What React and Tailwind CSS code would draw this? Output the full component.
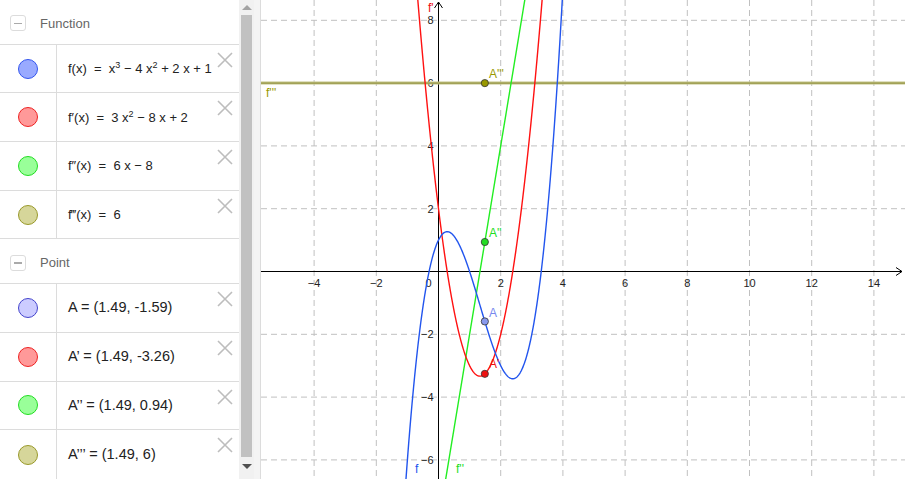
import React from "react";

const ox = 439.5;
const oy = 271.5;
const sx = 31.1;
const sy = 31.4;
const px = (x) => ox + x * sx;
const py = (y) => oy - y * sy;

const f = (x) => x * x * x - 4 * x * x + 2 * x + 1;
const f1 = (x) => 3 * x * x - 8 * x + 2;
const f2 = (x) => 6 * x - 8;

const curve = (fn) => {
  let d = "";
  for (let x = -6; x <= 15; x += 0.01) {
    const y = Math.max(-300, Math.min(800, py(fn(x))));
    d += (d ? "L" : "M") + px(x).toFixed(2) + " " + y.toFixed(2) + " ";
  }
  return d;
};

const gridX = [-4, -2, 2, 4, 6, 8, 10, 12, 14];
const gridY = [-6, -4, -2, 2, 4, 6, 8];
const lbl = (n) => (n < 0 ? "\u2212" + Math.abs(n) : String(n));

const Cross = () => (
  <svg className="absolute right-[6px] top-[7px]" width="16" height="16" viewBox="0 0 16 16">
    <path d="M1 1L15 15M15 1L1 15" stroke="#bdbdbd" strokeWidth="1.6" fill="none" />
  </svg>
);

const Row = ({ fill, stroke, children, last }) => (
  <div className={`relative flex h-[49px] ${last ? "" : "border-b border-[#dcdcdc]"}`}>
    <div className="flex w-[57px] shrink-0 items-center justify-center border-r border-[#dcdcdc]">
      <div className="h-[20px] w-[20px] rounded-full border" style={{ background: fill, borderColor: stroke }} />
    </div>
    <div className="flex items-center pl-[11px] text-[#222]">{children}</div>
    <Cross />
  </div>
);

const Header = ({ title }) => (
  <div className="flex h-[45px] items-center border-b border-[#dcdcdc] pl-[10px] pt-[3px]">
    <div className="flex h-[16px] w-[16px] items-center justify-center rounded-[3px] border border-[#dcdcdc]">
      <div className="h-[1.5px] w-[8px] bg-[#aaa]" />
    </div>
    <span className="ml-[14px] text-[13px] text-[#666]">{title}</span>
  </div>
);

const Math1 = ({ children }) => (
  <span className="whitespace-nowrap text-[13px]" style={{ fontFamily: '"Liberation Sans", Arial, sans-serif' }}>
    {children}
  </span>
);

const Sup = ({ children }) => <sup className="text-[9px]">{children}</sup>;

const Pt = ({ children }) => (
  <span className="whitespace-nowrap text-[14.5px]" style={{ fontFamily: '"Liberation Sans", Arial, sans-serif' }}>
    {children}
  </span>
);

const blue = ["#99aaff", "#3355ee"];
const red = ["#ff9999", "#ee2222"];
const green = ["#99ff99", "#22dd22"];
const olive = ["#d6d69a", "#99992a"];
const ptBlue = ["#ccccff", "#4444cc"];

export default function App() {
  return (
    <div className="flex h-[479px] w-[906px] overflow-hidden bg-white" style={{ fontFamily: '"Liberation Sans", Arial, sans-serif' }}>
      {/* algebra view */}
      <div className="flex w-[239px] shrink-0 flex-col">
        <Header title="Function" />
        <Row fill={blue[0]} stroke={blue[1]}>
          <Math1>
            f(x)&nbsp; = &nbsp;x<Sup>3</Sup> − 4 x<Sup>2</Sup> + 2 x + 1
          </Math1>
        </Row>
        <Row fill={red[0]} stroke={red[1]}>
          <Math1>
            f′(x)&nbsp; = &nbsp;3 x<Sup>2</Sup> − 8 x + 2
          </Math1>
        </Row>
        <Row fill={green[0]} stroke={green[1]}>
          <Math1>f″(x)&nbsp; = &nbsp;6 x − 8</Math1>
        </Row>
        <Row fill={olive[0]} stroke={olive[1]}>
          <Math1>f‴(x)&nbsp; = &nbsp;6</Math1>
        </Row>
        <Header title="Point" />
        <Row fill={ptBlue[0]} stroke={ptBlue[1]}>
          <Pt>A = (1.49, -1.59)</Pt>
        </Row>
        <Row fill={red[0]} stroke={red[1]}>
          <Pt>A’ = (1.49, -3.26)</Pt>
        </Row>
        <Row fill={green[0]} stroke={green[1]}>
          <Pt>A’’ = (1.49, 0.94)</Pt>
        </Row>
        <Row fill={olive[0]} stroke={olive[1]} last>
          <Pt>A’’’ = (1.49, 6)</Pt>
        </Row>
      </div>

      {/* scrollbar */}
      <div className="flex w-[15px] shrink-0 flex-col items-center bg-[#f1f1f1]">
        <div className="mt-[5px] h-0 w-0 border-x-[5px] border-b-[5px] border-x-transparent border-b-[#a3a3a3]" />
        <div className="mt-[5px] h-[442px] w-[11px] bg-[#c1c1c1]" />
        <div className="mt-[7px] h-0 w-0 border-x-[5px] border-t-[5px] border-x-transparent border-t-[#505050]" />
      </div>

      {/* splitter */}
      <div className="w-[7px] shrink-0 border-r border-[#dcdcdc] bg-[#f4f4f4]" />

      {/* graphics view */}
      <div className="flex-1">
        <svg width="644" height="479" viewBox="262 0 644 479" style={{ fontFamily: '"Liberation Sans", Arial, sans-serif' }}>
          {gridX.map((g) => (
            <line key={"gx" + g} x1={px(g)} y1="0" x2={px(g)} y2="479" stroke="#c0c0c0" strokeDasharray="6 4" />
          ))}
          {gridY.map((g) => (
            <line key={"gy" + g} x1="262" y1={py(g)} x2="906" y2={py(g)} stroke="#c0c0c0" strokeDasharray="6 4" />
          ))}
          <line x1="262" y1={oy} x2="903" y2={oy} stroke="#000" />
          <path d={`M897 ${oy - 4}L903 ${oy}L897 ${oy + 4}`} stroke="#000" fill="none" />
          <line x1={ox} y1="479" x2={ox} y2="2" stroke="#000" />
          <path d={`M${ox - 4} 8L${ox} 2L${ox + 4} 8`} stroke="#000" fill="none" />

          {gridX.map((g) => (
            <text key={"lx" + g} x={px(g)} y={oy + 15} fontSize="11" fill="#222" textAnchor="middle">
              {lbl(g)}
            </text>
          ))}
          <text x={ox - 10} y={oy + 15} fontSize="11" fill="#222" textAnchor="middle">0</text>
          {gridY.map((g) => (
            <text key={"ly" + g} x={ox - 5} y={py(g) + 4} fontSize="11" fill="#222" textAnchor="end">
              {lbl(g)}
            </text>
          ))}

          <line x1="262" y1={py(6)} x2="906" y2={py(6)} stroke="#c4c486" strokeWidth="3" />
          <line x1="262" y1={py(6)} x2="906" y2={py(6)} stroke="#8c8c3a" strokeWidth="1" />
          <path d={curve(f2)} stroke="#22ee22" strokeWidth="1.4" fill="none" />
          <path d={curve(f1)} stroke="#ff1111" strokeWidth="1.4" fill="none" />
          <path d={curve(f)} stroke="#2255ee" strokeWidth="1.4" fill="none" />

          <circle cx={px(1.49)} cy={py(6)} r="3.6" fill="#999900" stroke="#333" strokeWidth="0.8" />
          <circle cx={px(1.49)} cy={py(0.94)} r="3.6" fill="#22dd22" stroke="#333" strokeWidth="0.8" />
          <circle cx={px(1.49)} cy={py(-1.59)} r="3.6" fill="#8899ee" stroke="#333" strokeWidth="0.8" />
          <circle cx={px(1.49)} cy={py(-3.26)} r="3.6" fill="#ee1111" stroke="#333" strokeWidth="0.8" />

          <text x="490" y="78" fontSize="12" fill="#999900">A'''</text>
          <text x="490" y="237" fontSize="12" fill="#22dd22">A''</text>
          <text x="490" y="317" fontSize="12" fill="#7788ee">A</text>
          <text x="490" y="368" fontSize="12" fill="#ee1111">A'</text>
          <text x="429" y="12" fontSize="12" fill="#ee1111">f'</text>
          <text x="416" y="473" fontSize="12" fill="#2255ee">f</text>
          <text x="457" y="473" fontSize="12" fill="#22dd22">f''</text>
          <text x="267" y="97" fontSize="12" fill="#999900">f'''</text>
        </svg>
      </div>
    </div>
  );
}
